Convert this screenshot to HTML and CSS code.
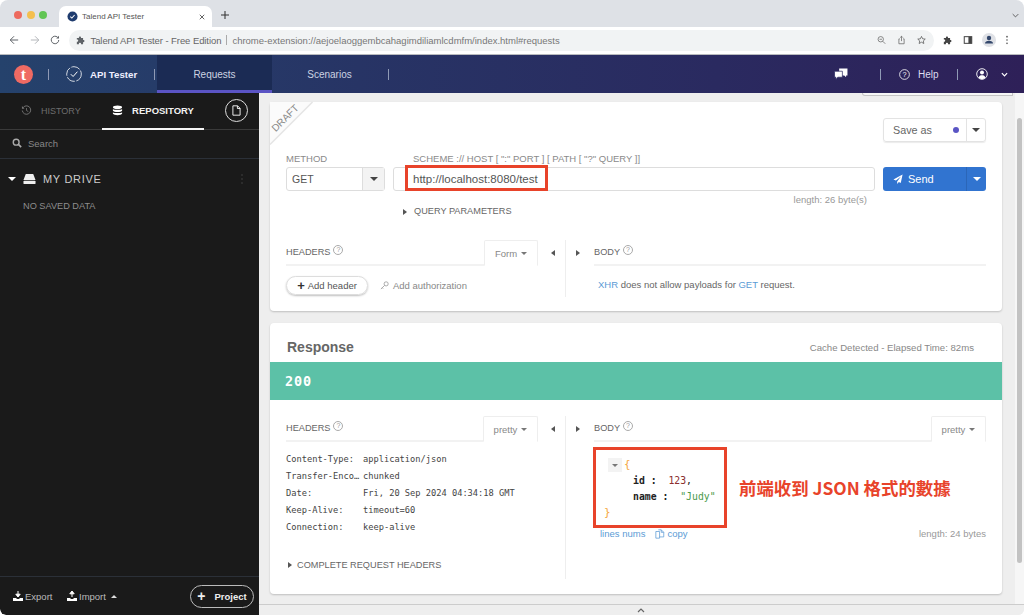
FILE: index.html
```html
<!DOCTYPE html>
<html lang="en">
<head>
  <meta charset="UTF-8">
  <meta name="viewport" content="width=device-width, initial-scale=1.0">
  <title>Talend API Tester</title>
  <link rel="stylesheet" href="styles.css">
</head>
<body>

<div class="window">
  <!-- Browser chrome -->
  <div class="tabstrip">
    <div class="traffic">
      <span class="light red"></span>
      <span class="light yellow"></span>
      <span class="light green"></span>
    </div>
    <div class="browser-tab">
      <svg class="favicon" viewBox="0 0 12 12"><circle cx="6" cy="6" r="5.5" fill="#1f3c6e"/><path d="M3.6 6.2l1.7 1.6 3-3.4" fill="none" stroke="#fff" stroke-width="1.1"/></svg>
      <span class="browser-tab-title">Talend API Tester</span>
      <svg class="tab-close" viewBox="0 0 8 8"><path d="M1 1l6 6M7 1l-6 6" stroke="#444" stroke-width="1.1"/></svg>
    </div>
    <svg class="new-tab" viewBox="0 0 10 10"><path d="M5 0v10M0 5h10" stroke="#333" stroke-width="1.3"/></svg>
    <svg class="tabs-menu" viewBox="0 0 10 6"><path d="M1 1l4 4 4-4" fill="none" stroke="#555" stroke-width="1.3"/></svg>
  </div>

  <div class="toolbar">
    <svg class="nav-icon" viewBox="0 0 12 12"><path d="M11 6H1.5M6 1.5L1.5 6 6 10.5" fill="none" stroke="#5f6368" stroke-width="1.2"/></svg>
    <svg class="nav-icon" viewBox="0 0 12 12"><path d="M1 6h9.500M6 1.500L10.500 6 6 10.500" fill="none" stroke="#b4b7bb" stroke-width="1.2"/></svg>
    <svg class="nav-icon" viewBox="0 0 12 12"><path d="M10.500 6A4.500 4.500 0 1 1 9 2.600" fill="none" stroke="#5f6368" stroke-width="1.2"/><path d="M10.800 0.800v3.400H7.400z" fill="#5f6368"/></svg>
    <div class="omnibox">
      <svg class="puzzle" viewBox="0 0 12 12"><path d="M1 3.500h2.500a1.300 1.300 0 1 1 2.500 0H8.500V6a1.300 1.300 0 1 1 0 2.500V11H6a1.300 1.300 0 1 0-2.500 0H1V8a1.300 1.300 0 1 0 0-2.500z" fill="#5f6368"/></svg>
      <span class="omni-name">Talend API Tester - Free Edition</span>
      <span class="omni-sep"></span>
      <span class="omni-url">chrome-extension://aejoelaoggembcahagimdiliamlcdmfm/index.html#requests</span>
      <div class="omni-actions">
        <svg class="omni-icon" viewBox="0 0 12 12"><circle cx="5" cy="5" r="3.600" fill="none" stroke="#666" stroke-width="1"/><path d="M7.700 7.700L11 11M3.300 5h3.400" stroke="#666" stroke-width="1"/></svg>
        <svg class="omni-icon" viewBox="0 0 12 12"><path d="M3.800 4.500H2.500V11h7V4.500H8.200M6 7.500V1M4.200 2.800L6 1l1.800 1.800" fill="none" stroke="#666" stroke-width="1"/></svg>
        <svg class="omni-icon" viewBox="0 0 12 12"><path d="M6 1.200l1.500 3.200 3.500.4-2.600 2.400.7 3.500L6 8.900l-3.100 1.800.7-3.500L1 4.800l3.500-.4z" fill="none" stroke="#555" stroke-width="1"/></svg>
      </div>
    </div>
    <div class="toolbar-right">
      <svg class="tool-icon" viewBox="0 0 12 12"><path d="M1 3.500h2.500a1.300 1.300 0 1 1 2.500 0H8.500V6a1.300 1.300 0 1 1 0 2.500V11H6a1.300 1.300 0 1 0-2.500 0H1V8a1.300 1.300 0 1 0 0-2.500z" fill="#444"/></svg>
      <svg class="tool-icon" viewBox="0 0 12 12"><rect x="1.500" y="2" width="9" height="8" fill="none" stroke="#444" stroke-width="1.200"/><rect x="6.500" y="2" width="4" height="8" fill="#444"/></svg>
      <svg class="avatar" viewBox="0 0 14 14"><circle cx="7" cy="7" r="7" fill="#dfe1e6"/><circle cx="7" cy="5" r="2.200" fill="#33476b"/><path d="M3 10.500c0-2 1.800-2.800 4-2.800s4 .8 4 2.800z" fill="#33476b"/></svg>
      <svg class="kebab" viewBox="0 0 4 12"><circle cx="2" cy="2" r="1" fill="#555"/><circle cx="2" cy="6" r="1" fill="#555"/><circle cx="2" cy="10" r="1" fill="#555"/></svg>
    </div>
  </div>

  <!-- App header -->
  <header class="app-header">
    <div class="logo">t</div>
    <span class="hdr-sep sep-logo"></span>
    <svg class="check-badge" viewBox="0 0 16 16"><circle cx="8" cy="8" r="7.300" fill="none" stroke="#fff" stroke-width="0.800" stroke-dasharray="9 1.500"/><path d="M4.800 8.200l2.300 2.300 4.300-4.800" fill="none" stroke="#fff" stroke-width="1"/></svg>
    <span class="app-name">API Tester</span>
    <span class="hdr-sep sep-name"></span>
    <div class="nav-tab active">Requests</div>
    <div class="nav-tab">Scenarios</div>
    <span class="hdr-sep"></span>
    <div class="header-right">
      <svg class="chat-icon" viewBox="0 0 15 13"><path d="M5.500 0.500h9v7.500H13v2l-2-2H5.500z" fill="#fff"/><path d="M0.500 3.500h8.500v6.500H4l-2 2.500v-2.500H0.500z" fill="#fff" stroke="#2b2a60" stroke-width="0.800"/></svg>
      <span class="hdr-sep sep-chat"></span>
      <svg class="help-icon" viewBox="0 0 12 12"><circle cx="6" cy="6" r="5.300" fill="none" stroke="#fff" stroke-width="0.900"/><text x="6" y="8.700" text-anchor="middle" class="help-q">?</text></svg>
      <span class="help-label">Help</span>
      <span class="hdr-sep sep-help"></span>
      <svg class="user-icon" viewBox="0 0 12 12"><circle cx="6" cy="6" r="5.300" fill="none" stroke="#fff" stroke-width="0.900"/><circle cx="6" cy="4.600" r="2" fill="#fff"/><path d="M2.500 9.500c.6-1.800 2-2.300 3.500-2.300s2.900.5 3.500 2.300C8.500 10.800 7.200 11.200 6 11.200s-2.500-.4-3.500-1.700z" fill="#fff"/></svg>
      <svg class="user-chevron" viewBox="0 0 8 5"><path d="M1 1l3 3 3-3" fill="none" stroke="#fff" stroke-width="1.400"/></svg>
    </div>
  </header>

  <div class="app-body">
    <!-- Left sidebar -->
    <aside class="sidebar">
      <div class="side-tabs">
        <div class="side-tab history">
          <svg class="side-tab-icon" viewBox="0 0 12 12"><path d="M2 3.200A4.600 4.600 0 1 1 1.400 6" fill="none" stroke="#777" stroke-width="1"/><path d="M1 1.200v2.800h2.800z" fill="#777"/><path d="M6 3.300V6l2 1.200" fill="none" stroke="#777" stroke-width="0.900"/></svg>
          HISTORY
        </div>
        <div class="side-tab repository">
          <svg class="side-tab-icon" viewBox="0 0 12 12"><ellipse cx="6" cy="2.400" rx="5" ry="1.900" fill="#fff"/><path d="M1 4.300c1 1.300 9 1.300 10 0v1.900c-1 1.800-9 1.800-10 0z" fill="#fff"/><path d="M1 7.800c1 1.300 9 1.300 10 0v1.800c-1 2-9 2-10 0z" fill="#fff"/></svg>
          REPOSITORY
        </div>
        <div class="new-file">
          <svg viewBox="0 0 10 12"><path d="M1 .8h5.200L9 3.600v7.600H1z" fill="none" stroke="#fff" stroke-width="1"/><path d="M6 .8v3h3" fill="none" stroke="#fff" stroke-width="1"/></svg>
        </div>
      </div>
      <div class="side-search">
        <svg class="search-icon" viewBox="0 0 12 12"><circle cx="5" cy="5" r="3.500" fill="none" stroke="#aaa" stroke-width="1.700"/><path d="M7.700 7.700L11 11" stroke="#aaa" stroke-width="2"/></svg>
        <span>Search</span>
      </div>
      <div class="drive-row">
        <span class="caret-down white"></span>
        <svg class="drive-icon" viewBox="0 0 14 12"><path d="M3 .5h8l2.500 6.500H.5z" fill="#eee"/><rect x="0.500" y="7.800" width="13" height="3.700" rx="1" fill="#eee"/></svg>
        <span class="drive-name">MY DRIVE</span>
        <svg class="drive-dots" viewBox="0 0 2 10"><circle cx="1" cy="1" r=".8" fill="#444"/><circle cx="1" cy="5" r=".8" fill="#444"/><circle cx="1" cy="9" r=".8" fill="#444"/></svg>
      </div>
      <div class="no-data">NO SAVED DATA</div>
      <div class="side-footer">
        <div class="foot-link">
          <svg class="foot-icon" viewBox="0 0 10 10"><path d="M5 0v5M2.800 3.200L5 6l2.200-2.800z" stroke="#fff" fill="#fff"/><path d="M0 7h3l1 1h2l1-1h3v3H0z" fill="#fff"/></svg>
          Export
        </div>
        <div class="foot-link">
          <svg class="foot-icon" viewBox="0 0 10 10"><path d="M5 6V2M2.800 2.800L5 0l2.200 2.800z" stroke="#fff" fill="#fff"/><path d="M0 7h3l1 1h2l1-1h3v3H0z" fill="#fff"/></svg>
          Import
          <span class="caret-up"></span>
        </div>
        <div class="project-btn"><span class="project-plus">+</span> Project</div>
      </div>
    </aside>

    <!-- Main area -->
    <main class="content">
      <div class="notif-edge"></div>

      <section class="card request-card">
        <svg class="draft-ribbon" viewBox="0 0 46 46">
          <path d="M1 1h42L1 43z" fill="#fbfbfb"/>
          <path d="M43.500 1L1 43.500" fill="none" stroke="#e4e4e4" stroke-width="1.500"/>
          <text class="draft-text" text-anchor="middle" transform="translate(16 17) rotate(-45)" y="3.500">DRAFT</text>
        </svg>
        <div class="save-row">
          <div class="btn-group save-group">
            <span class="save-label">Save as</span>
            <span class="save-dot"></span>
            <span class="btn-split"><span class="caret-down dark"></span></span>
          </div>
        </div>
        <div class="url-labels">
          <span class="method-label">METHOD</span>
          <span class="scheme-label">SCHEME :// HOST [ ":" PORT ] [ PATH [ "?" QUERY ]]</span>
        </div>
        <div class="url-row">
          <div class="method-select">
            <span class="method-value">GET</span>
            <span class="select-arrow"><span class="caret-down dark"></span></span>
          </div>
          <div class="url-input">
            <span class="url-text">http://localhost:8080/test</span>
            <div class="red-box url-mark"></div>
          </div>
          <div class="send-btn">
            <svg class="send-icon" viewBox="0 0 12 12"><path d="M11.500.5L.5 6.500l3 1.400 6-5-4.500 6v3l2-2.200 2.300 1z" fill="#fff"/></svg>
            <span class="send-label">Send</span>
            <span class="send-split"><span class="caret-down white"></span></span>
          </div>
        </div>
        <div class="url-length">length: 26 byte(s)</div>
        <div class="query-row"><span class="caret-right"></span>QUERY PARAMETERS</div>

        <div class="panes request-panes">
          <div class="pane">
            <div class="pane-head">
              <span class="pane-title">HEADERS</span>
              <span class="hint">?</span>
              <span class="pane-tab form-tab">Form <span class="caret-down grey"></span></span>
            </div>
            <div class="add-row">
              <div class="add-header"><span class="add-plus">+</span> Add header</div>
              <svg class="key-icon" viewBox="0 0 10 10"><circle cx="6.800" cy="3.200" r="2.300" fill="none" stroke="#999" stroke-width=".9"/><path d="M5.200 4.800L1 9M2.500 7.500l1 1" stroke="#999" stroke-width=".9" fill="none"/></svg>
              <span class="add-auth">Add authorization</span>
            </div>
          </div>
          <div class="pane-divider">
            <span class="caret-left"></span>
            <span class="divider-line"></span>
            <span class="caret-right"></span>
          </div>
          <div class="pane">
            <div class="pane-head">
              <span class="pane-title">BODY</span>
              <span class="hint">?</span>
            </div>
            <div class="xhr-note"><span class="link">XHR</span> does not allow payloads for <span class="link">GET</span> request.</div>
          </div>
        </div>
      </section>

      <section class="card response-card">
        <div class="response-head">
          <h2 class="response-title">Response</h2>
          <span class="elapsed">Cache Detected - Elapsed Time: 82ms</span>
        </div>
        <div class="status-band">200</div>

        <div class="panes response-panes">
          <div class="pane">
            <div class="pane-head">
              <span class="pane-title">HEADERS</span>
              <span class="hint">?</span>
              <span class="pane-tab pretty-tab">pretty <span class="caret-down grey"></span></span>
            </div>
            <dl class="header-list">
              <div class="header-line"><dt>Content-Type:</dt><dd>application/json</dd></div>
              <div class="header-line"><dt>Transfer-Enco…</dt><dd>chunked</dd></div>
              <div class="header-line"><dt>Date:</dt><dd>Fri, 20 Sep 2024 04:34:18 GMT</dd></div>
              <div class="header-line"><dt>Keep-Alive:</dt><dd>timeout=60</dd></div>
              <div class="header-line"><dt>Connection:</dt><dd>keep-alive</dd></div>
            </dl>
            <div class="complete-row"><span class="caret-right"></span>COMPLETE REQUEST HEADERS</div>
          </div>
          <div class="pane-divider">
            <span class="caret-left"></span>
            <span class="divider-line"></span>
            <span class="caret-right"></span>
          </div>
          <div class="pane">
            <div class="pane-head">
              <span class="pane-title">BODY</span>
              <span class="hint">?</span>
              <span class="pane-tab pretty-tab">pretty <span class="caret-down grey"></span></span>
            </div>
            <div class="json-row">
              <div class="red-box json-box">
                <div class="json-line first"><span class="fold"><span class="caret-down grey"></span></span><span class="brace">{</span></div>
                <div class="json-line prop"><span class="key">id :</span>  <span class="num">123</span>,</div>
                <div class="json-line prop"><span class="key">name :</span>  <span class="str">"Judy"</span></div>
                <div class="json-line last"><span class="brace">}</span></div>
              </div>
              <div class="json-note">前端收到 JSON 格式的數據</div>
            </div>
            <div class="json-foot">
              <span class="link">lines nums</span>
              <svg class="copy-icon" viewBox="0 0 12 12"><path d="M1 3h4.500v8H1zM4 1h3.500l3 3v5.500H5.500M7.500 1v3h3" fill="none" stroke="#5b9bd5" stroke-width=".9"/></svg>
              <span class="link">copy</span>
              <span class="body-length">length: 24 bytes</span>
            </div>
          </div>
        </div>
      </section>

      <div class="scrollbar"><span class="scroll-thumb"></span></div>
    </main>
  </div>

  <div class="bottom-bar"><svg class="bottom-chevron" viewBox="0 0 8 5"><path d="M1 4l3-3 3 3" fill="none" stroke="#666" stroke-width="1.200"/></svg></div>
</div>

</body>
</html>
```

FILE: styles.css
```css
* {
  box-sizing: border-box;
}
html, body {
  margin: 0;
  height: 100%;
  overflow: hidden;
  background: #fff;
}
body {
  font-family: "Liberation Sans", Arial, sans-serif;
  color: #555;
}
.window {
  width: 1024px;
  height: 615px;
  display: flex;
  flex-direction: column;
  position: relative;
  overflow: hidden;
  border-radius: 8px 8px 6px 6px;
}

/* browser chrome */
.tabstrip {
  height: 27px;
  background: #dee1e6;
  display: flex;
  align-items: flex-end;
  flex-shrink: 0;
}
.traffic {
  width: 59px;
  align-self: stretch;
  display: flex;
  align-items: center;
  gap: 4.500px;
  padding: 2px 0 0 14px;
}
.light {
  width: 8px;
  height: 8px;
  border-radius: 50%;
}
.light.red { background: #ed6a5e; }
.light.yellow { background: #f4bf4f; }
.light.green { background: #61c554; }
.browser-tab {
  width: 153px;
  height: 21px;
  background: #fff;
  border-radius: 7px 7px 0 0;
  display: flex;
  align-items: center;
  padding: 0 7px 0 8px;
}
.favicon {
  width: 11px;
  height: 11px;
}
.browser-tab-title {
  font-size: 8px;
  margin-left: 4px;
  color: #555;
  flex: 1;
}
.tab-close {
  width: 6px;
  height: 6px;
}
.new-tab {
  width: 8px;
  height: 8px;
  margin: 0 0 8px 9px;
}
.tabs-menu {
  width: 7px;
  height: 5px;
  margin: 0 5px 9px auto;
}
.toolbar {
  height: 28px;
  background: #fff;
  display: flex;
  align-items: center;
  padding: 0 0 1px 9px;
  border-bottom: 1px solid #b9bbbe;
  flex-shrink: 0;
}
.nav-icon {
  width: 10px;
  height: 10px;
  margin-right: 10.500px;
}
.omnibox {
  width: 865px;
  height: 21px;
  margin-left: -2px;
  background: #f1f3f4;
  border-radius: 11px;
  display: flex;
  align-items: center;
  padding: 0 8px 0 7px;
  font-size: 9.500px;
}
.puzzle {
  width: 10px;
  height: 10px;
}
.omni-name {
  margin-left: 5px;
  color: #666;
  letter-spacing: -.08px;
}
.omni-sep {
  width: 1px;
  height: 10px;
  background: #aaa;
  margin: 0 5px;
}
.omni-url {
  color: #777;
}
.omni-actions {
  margin-left: auto;
  display: flex;
  gap: 11px;
}
.omni-icon {
  width: 9px;
  height: 10px;
}
.toolbar-right {
  display: flex;
  align-items: center;
  margin-left: 9px;
  gap: 10px;
}
.tool-icon {
  width: 10px;
  height: 10px;
}
.avatar {
  width: 14px;
  height: 14px;
  margin-left: -1px;
}
.kebab {
  width: 4px;
  height: 10px;
  margin-left: -1px;
}

/* app header */
.app-header {
  height: 38px;
  flex-shrink: 0;
  background: linear-gradient(90deg, #25426c 0%, #273465 35%, #2a2a60 70%, #2e2058 100%);
  display: flex;
  align-items: center;
  color: #fff;
  padding-left: 14px;
}
.logo {
  width: 19px;
  height: 19px;
  border-radius: 50%;
  background: #ef6a63;
  color: #fff;
  font-family: "Liberation Serif", serif;
  font-weight: bold;
  font-size: 16px;
  line-height: 19px;
  text-align: center;
}
.hdr-sep {
  width: 1px;
  height: 11px;
  background: #8f9ab5;
  flex-shrink: 0;
}
.sep-logo {
  margin: 0 17px 0 15px;
}
.check-badge {
  width: 16px;
  height: 16px;
}
.app-name {
  margin-left: 8px;
  font-size: 9.700px;
  font-weight: bold;
  color: #eef;
  width: 64px;
}
.sep-name {
  margin-right: 2px;
}
.nav-tab {
  width: 115px;
  align-self: stretch;
  display: flex;
  align-items: center;
  justify-content: center;
  font-size: 10px;
  color: #ccd3e2;
  padding-top: 1px;
}
.nav-tab.active {
  background: #1b2b54;
  border-bottom: 3px solid #5b54c4;
  padding-top: 3px;
}
.nav-tab + .nav-tab {
  margin-right: 1px;
}
.header-right {
  margin-left: auto;
  display: flex;
  align-items: center;
}
.chat-icon {
  width: 14px;
  height: 12px;
}
.sep-chat {
  margin: 0 18px 0 32px;
}
.help-icon {
  width: 11px;
  height: 11px;
}
.help-q {
  font-size: 8px;
  fill: #fff;
  font-family: "Liberation Sans", sans-serif;
}
.help-label {
  margin-left: 8px;
  font-size: 10px;
  color: #dde;
  width: 39px;
}
.sep-help {
  margin-right: 18px;
}
.user-icon {
  width: 12px;
  height: 12px;
}
.user-chevron {
  width: 7px;
  height: 5px;
  margin: 1px 16px 0 13px;
}

/* layout under the header */
.app-body {
  flex: 1;
  display: flex;
  min-height: 0;
}
.sidebar {
  width: 259px;
  flex-shrink: 0;
  background: #1a1a1a;
  display: flex;
  flex-direction: column;
  color: #999;
  border-bottom-left-radius: 6px;
  position: relative;
  z-index: 3;
}
.side-tabs {
  height: 37px;
  display: flex;
  align-items: center;
  border-bottom: 1px solid #3a3a3a;
  position: relative;
  padding-left: 21px;
}
.side-tab {
  display: flex;
  align-items: center;
  font-size: 9.500px;
  gap: 9px;
  height: 100%;
  padding-bottom: 1px;
}
.side-tab.history {
  color: #6e6e6e;
  width: 81px;
  font-size: 9px;
}
.side-tab.repository {
  color: #f2f2f2;
  font-weight: bold;
  width: 102px;
  justify-content: center;
  border-bottom: 2px solid #f5f5f5;
  margin-bottom: -1px;
  padding-top: 1px;
}
.side-tab-icon {
  width: 11px;
  height: 11px;
}
.new-file {
  width: 23px;
  height: 23px;
  border: 1px solid #ddd;
  border-radius: 50%;
  margin-left: 21px;
  margin-top: -2px;
  display: flex;
  align-items: center;
  justify-content: center;
}
.new-file svg {
  width: 9px;
  height: 11px;
}
.side-search {
  height: 29px;
  display: flex;
  align-items: center;
  padding: 0 0 2px 12px;
  gap: 6px;
  font-size: 9.500px;
  color: #888;
  border-bottom: 1px solid #2b3038;
}
.search-icon {
  width: 10px;
  height: 10px;
}
.drive-row {
  height: 40px;
  display: flex;
  align-items: center;
  padding: 0 0 1px 8px;
}
.drive-icon {
  width: 13px;
  height: 12px;
  margin-left: 7px;
}
.drive-name {
  margin-left: 7px;
  font-size: 11px;
  letter-spacing: .7px;
  color: #ccc;
}
.drive-dots {
  width: 2px;
  height: 10px;
  margin-left: auto;
  margin-right: 16px;
}
.no-data {
  font-size: 9.200px;
  padding-left: 23px;
  margin-top: 2px;
  color: #8d8d8d;
}
.side-footer {
  margin-top: auto;
  height: 39px;
  border-top: 1px solid #2b3038;
  display: flex;
  align-items: center;
  padding: 0 5px 0 13px;
  font-size: 9.500px;
  color: #bbb;
}
.foot-link {
  display: flex;
  align-items: center;
  gap: 2px;
  width: 54px;
}
.foot-icon {
  width: 10px;
  height: 10px;
}
.project-btn {
  margin-left: auto;
  width: 64px;
  height: 23px;
  border: 1px solid #bbb;
  border-radius: 12px;
  display: flex;
  align-items: center;
  justify-content: center;
  gap: 9px;
  font-weight: bold;
  color: #eee;
  font-size: 9.500px;
}
.project-plus {
  font-size: 14px;
  line-height: 14px;
}

/* carets */
.caret-down, .caret-up, .caret-left, .caret-right {
  display: inline-block;
  width: 0;
  height: 0;
  flex-shrink: 0;
}
.caret-down {
  border-left: 4px solid transparent;
  border-right: 4px solid transparent;
  border-top: 4px solid #555;
}
.caret-down.white { border-top-color: #fff; }
.caret-down.dark { border-top-color: #444; }
.caret-down.grey {
  border-left-width: 3px;
  border-right-width: 3px;
  border-top-width: 3px;
  border-top-color: #777;
  vertical-align: 2px;
  margin-left: 2px;
}
.caret-up {
  border-left: 3px solid transparent;
  border-right: 3px solid transparent;
  border-bottom: 3px solid #ddd;
  margin-left: 3px;
}
.caret-left {
  border-top: 3.500px solid transparent;
  border-bottom: 3.500px solid transparent;
  border-right: 4px solid #555;
}
.caret-right {
  border-top: 3.500px solid transparent;
  border-bottom: 3.500px solid transparent;
  border-left: 4px solid #555;
}

/* main area */
.content {
  flex: 1;
  background: #eeeeee;
  padding: 9px 22px 0 11px;
  position: relative;
  min-width: 0;
}
.notif-edge {
  position: absolute;
  top: 0;
  right: 11px;
  width: 151px;
  height: 3px;
  border: 1px solid #c4c4c4;
  border-top: none;
  border-radius: 0 0 0 6px;
  background: #f6f6f6;
}
.scrollbar {
  position: absolute;
  top: 0;
  right: 0;
  bottom: 0;
  width: 9px;
  background: #f6f6f6;
}
.scroll-thumb {
  position: absolute;
  top: 25px;
  left: 2px;
  width: 5px;
  height: 445px;
  border-radius: 3px;
  background: #c2c2c2;
}
.card {
  width: 732px;
  background: #fff;
  border-radius: 4px;
  box-shadow: 0 1px 2px rgba(0, 0, 0, 0.2);
  position: relative;
}
.request-card {
  height: 209px;
  padding: 16px 16px 0;
  margin-bottom: 12px;
}
.draft-ribbon {
  position: absolute;
  top: -1px;
  left: -1px;
  width: 46px;
  height: 46px;
}
.draft-text {
  font-size: 10px;
  fill: #888;
  font-family: "Liberation Sans", sans-serif;
}
.save-row {
  display: flex;
  justify-content: flex-end;
  height: 24px;
}
.btn-group {
  width: 103px;
  height: 24px;
  border: 1px solid #e3e3e3;
  border-radius: 3px;
  display: flex;
  align-items: center;
  font-size: 10.800px;
  color: #666;
  padding-left: 9px;
  box-shadow: 0 1px 1px rgba(0, 0, 0, 0.08);
}
.save-dot {
  width: 6px;
  height: 6px;
  border-radius: 50%;
  background: #5a55c4;
  margin-left: auto;
  margin-right: 7px;
}
.btn-split {
  width: 19px;
  height: 100%;
  border-left: 1px solid #e3e3e3;
  display: flex;
  align-items: center;
  justify-content: center;
}
.url-labels {
  display: flex;
  font-size: 9.500px;
  color: #8a8a8a;
  height: 25px;
  padding-top: 11px;
  line-height: 11px;
}
.method-label {
  width: 127px;
}
.url-row {
  display: flex;
  height: 24px;
}
.method-select {
  width: 99px;
  height: 24px;
  border: 1px solid #ddd;
  border-radius: 3px;
  display: flex;
  align-items: center;
  font-size: 10.500px;
  color: #555;
  padding-left: 5px;
}
.method-value {
  flex: 1;
}
.select-arrow {
  width: 22px;
  height: 100%;
  background: #f3f3f3;
  border-left: 1px solid #ddd;
  display: flex;
  align-items: center;
  justify-content: center;
}
.url-input {
  width: 482px;
  height: 24px;
  margin-left: 8px;
  border: 1px solid #ddd;
  border-radius: 3px;
  display: flex;
  align-items: center;
  padding-left: 19px;
  font-size: 11.500px;
  color: #555;
  position: relative;
}
.red-box {
  border: 3px solid #e8432a;
}
.url-mark {
  position: absolute;
  left: 11px;
  top: -3px;
  width: 143px;
  height: 26px;
}
.send-btn {
  width: 103px;
  height: 24px;
  margin-left: 8px;
  background: #3174d0;
  border-radius: 3px;
  display: flex;
  align-items: center;
  color: #fff;
  padding-left: 10px;
  font-size: 11px;
}
.send-icon {
  width: 10px;
  height: 10px;
}
.send-label {
  margin-left: 5px;
  flex: 1;
}
.send-split {
  width: 20px;
  height: 100%;
  border-left: 1px solid #2b66b8;
  display: flex;
  align-items: center;
  justify-content: center;
}
.url-length {
  font-size: 9.500px;
  color: #999;
  text-align: right;
  padding-right: 119px;
  height: 14px;
  line-height: 18px;
}
.query-row {
  font-size: 9.200px;
  color: #666;
  display: flex;
  align-items: center;
  gap: 7px;
  padding-left: 117px;
  height: 17px;
  margin-top: -2px;
  line-height: 17px;
}
.panes {
  display: grid;
  grid-template-columns: 252px 56px 392px;
}
.request-panes {
  margin-top: 20px;
  height: 57px;
}
.pane {
  min-width: 0;
}
.pane-head {
  height: 26px;
  border-bottom: 2px solid #f2f2f2;
  display: flex;
  align-items: center;
  position: relative;
}
.pane-title {
  font-size: 9.200px;
  color: #666;
}
.hint {
  width: 10px;
  height: 10px;
  border: 1px solid #aaa;
  border-radius: 50%;
  font-size: 7px;
  line-height: 8px;
  text-align: center;
  color: #999;
  margin: -5px 0 0 3px;
}
.pane-tab {
  position: absolute;
  top: 0;
  right: 0;
  height: 26px;
  border: 1px solid #eee;
  border-bottom: 1px solid #fff;
  border-radius: 2px 2px 0 0;
  background: #fff;
  font-size: 9.500px;
  color: #888;
  display: flex;
  align-items: center;
  justify-content: center;
  gap: 2px;
}
.form-tab {
  width: 54px;
}
.pretty-tab {
  width: 55px;
}
.pane-divider {
  display: flex;
  justify-content: space-between;
  padding: 10px 14px 0 13px;
  position: relative;
}
.divider-line {
  position: absolute;
  top: 0;
  bottom: 0;
  left: 27px;
  width: 1px;
  background: #eee;
}
.add-row {
  display: flex;
  align-items: center;
  margin-top: 10px;
  font-size: 9.500px;
}
.add-header {
  width: 82px;
  height: 19px;
  border: 1px solid #ddd;
  border-radius: 10px;
  box-shadow: 0 1px 2px rgba(0, 0, 0, 0.25);
  display: flex;
  align-items: center;
  justify-content: center;
  gap: 3px;
  color: #555;
}
.add-plus {
  font-weight: bold;
  font-size: 13px;
  line-height: 13px;
  color: #333;
}
.key-icon {
  width: 9px;
  height: 9px;
  margin-left: 12px;
}
.add-auth {
  margin-left: 4px;
  color: #888;
}
.xhr-note {
  font-size: 9.500px;
  color: #666;
  padding: 13px 0 0 4px;
}
.link {
  color: #5b9bd5;
}

/* response card */
.response-card {
  height: 271px;
}
.response-head {
  height: 39px;
  display: flex;
  align-items: center;
  justify-content: space-between;
  padding: 9px 28px 0 17px;
}
.response-title {
  margin: 0;
  font-size: 14px;
  font-weight: bold;
  color: #666;
}
.elapsed {
  font-size: 9.600px;
  color: #888;
}
.status-band {
  height: 38px;
  background: #5cc1a7;
  color: #fff;
  font-family: "DejaVu Sans Mono", monospace;
  font-weight: bold;
  font-size: 13.500px;
  letter-spacing: .9px;
  line-height: 38px;
  padding-left: 15px;
}
.response-panes {
  padding: 0 16px;
  margin-top: 16px;
  height: 163px;
}
.header-list {
  margin: 9px 0 0;
  font-family: "DejaVu Sans Mono", monospace;
  font-size: 8.700px;
  color: #444;
}
.header-line {
  display: flex;
  height: 17px;
  line-height: 17px;
  white-space: nowrap;
}
.header-line dt {
  width: 77px;
  flex-shrink: 0;
}
.header-line dd {
  margin: 0;
}
.complete-row {
  font-size: 9.200px;
  color: #666;
  display: flex;
  align-items: center;
  gap: 5px;
  padding-left: 2px;
  margin-top: 24px;
}
.json-row {
  display: flex;
  align-items: center;
  margin: 5px 0 0 -1px;
}
.json-box {
  width: 134px;
  height: 81px;
  font-family: "DejaVu Sans Mono", monospace;
  font-size: 9.800px;
  color: #222;
  padding: 7px 0 0 8px;
  flex-shrink: 0;
}
.json-line {
  height: 16px;
  line-height: 16px;
  white-space: pre;
}
.json-line.first {
  display: flex;
  align-items: center;
  padding-left: 4px;
}
.json-line.prop {
  padding-left: 29px;
}
.fold {
  width: 14px;
  height: 14px;
  background: #f3f3f3;
  display: flex;
  align-items: center;
  justify-content: center;
  margin-right: 2px;
}
.fold .caret-down {
  margin: 0;
  vertical-align: 0;
}
.key {
  font-weight: bold;
}
.brace {
  color: #f5a742;
  font-size: 11px;
}
.num {
  color: #8b2e2e;
}
.str {
  color: #4c9a4c;
}
.json-note {
  margin-left: 12px;
  font-family: "Noto Sans CJK TC", "Liberation Sans", sans-serif;
  font-weight: bold;
  font-size: 17.400px;
  color: #e8432a;
  white-space: nowrap;
}
.json-foot {
  display: flex;
  align-items: center;
  font-size: 9.500px;
  padding-left: 6px;
  height: 13px;
  margin-top: -1px;
}
.copy-icon {
  width: 10px;
  height: 10px;
  margin: 0 2px 0 10px;
}
.body-length {
  margin-left: auto;
  color: #999;
}
.bottom-bar {
  position: absolute;
  left: 259px;
  right: 0;
  bottom: 0;
  height: 11px;
  background: #eee;
  border-top: 1px solid #ccc;
  display: flex;
  justify-content: center;
  align-items: center;
  padding-right: 2px;
  z-index: 2;
}
.bottom-chevron {
  width: 8px;
  height: 5px;
}
```
